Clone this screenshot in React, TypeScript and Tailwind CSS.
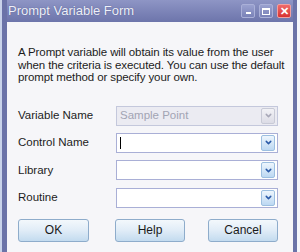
import { ChevronDown } from "lucide-react"

const font = { fontFamily: '"Liberation Sans", Arial, sans-serif' }

function Field({ value, disabled, caret }: { value?: string; disabled?: boolean; caret?: boolean }) {
  return (
    <div
      className={
        "flex h-[20px] w-[162px] items-center border pl-[3px] pr-[2px] " +
        (disabled ? "border-[#c4c8dc] bg-[#ebebf2]" : "border-[#a9afd6] bg-white")
      }
    >
      <div className="flex-1 text-[11.5px] leading-none text-[#a2a4b4]">
        {caret ? <span className="inline-block h-[12px] w-px bg-black align-middle" /> : value}
      </div>
      <div
        className={
          "flex h-[16px] w-[14px] items-center justify-center rounded-[2px] border " +
          (disabled
            ? "border-[#c8cad6] bg-gradient-to-b from-[#f2f2f6] to-[#dcdce6] text-[#a8a8b8]"
            : "border-[#9cbfe0] bg-gradient-to-b from-[#eef6fd] to-[#bcd8f2] text-[#2a5aa8]")
        }
      >
        <ChevronDown size={9} strokeWidth={4} />
      </div>
    </div>
  )
}

function Btn({ label, w, ml }: { label: string; w: string; ml: string }) {
  return (
    <div
      className={
        "flex h-[23px] items-center justify-center rounded-[3px] border border-[#8eaccb] bg-gradient-to-b from-[#f3f8fc] via-[#e0ecf7] to-[#c3dbef] text-[12px] text-[#1a1a1a] " +
        w +
        " " +
        ml
      }
    >
      {label}
    </div>
  )
}

export default function App() {
  const rows = [
    { label: "Variable Name", value: "Sample Point", disabled: true },
    { label: "Control Name", caret: true },
    { label: "Library" },
    { label: "Routine" },
  ]

  return (
    <div className="flex h-[252px] w-[300px] overflow-hidden bg-[#dfe5f1]" style={font}>
      <div className="w-[2px] bg-[#c9d3ea]" />
      <div className="flex w-[295px] flex-col border-l-[5px] border-r-[4px] border-[#6b73a8]">
        <div className="flex h-[22px] items-center bg-gradient-to-b from-[#8e95c5] to-[#6d75ab] pl-[1px] pr-[2px]">
          <span className="text-[13px] text-[#eef0fa] [text-shadow:0_0_1px_#4a5080]">Prompt Variable Form</span>
          <div className="ml-auto flex items-center gap-[4px]">
            <div className="flex h-[14px] w-[14px] items-end justify-center rounded-[2px] border border-[#aab0d8] bg-gradient-to-b from-[#9aa1cf] to-[#7a82b8] pb-[3px]">
              <div className="h-[2px] w-[5px] bg-white" />
            </div>
            <div className="flex h-[14px] w-[14px] items-center justify-center rounded-[2px] border border-[#aab0d8] bg-gradient-to-b from-[#9aa1cf] to-[#7a82b8]">
              <div className="h-[7px] w-[8px] border border-t-2 border-white" />
            </div>
            <div className="flex h-[14px] w-[14px] items-center justify-center rounded-[2px] border border-[#f0a0a0] bg-gradient-to-b from-[#f06a6a] to-[#d83030] text-[11px] font-bold leading-none text-white">
              ✕
            </div>
          </div>
        </div>
        <div className="flex flex-1 flex-col bg-[#f6f6f9] pl-[11px] pr-[15px]">
          <p className="mt-[24px] whitespace-nowrap text-[11.5px] leading-[12.5px] tracking-[-0.1px] text-[#1c1c1c]">
            A Prompt variable will obtain its value from the user
            <br />
            when the criteria is executed. You can use the default
            <br />
            prompt method or specify your own.
          </p>
          <div className="mt-[22px] flex flex-col gap-y-[7.4px]">
            {rows.map((r) => (
              <div key={r.label} className="flex items-center">
                <span className="w-[98px] text-[11.5px] text-[#1c1c1c]">{r.label}</span>
                <Field value={r.value} disabled={r.disabled} caret={r.caret} />
              </div>
            ))}
          </div>
          <div className="mt-[11px] flex">
            <Btn label="OK" w="w-[73px]" ml="ml-0" />
            <Btn label="Help" w="w-[72px]" ml="ml-[26px]" />
            <Btn label="Cancel" w="w-[72px]" ml="ml-[23px]" />
          </div>
        </div>
      </div>
      <div className="flex-1 bg-[#f4f6fb]" />
    </div>
  )
}
